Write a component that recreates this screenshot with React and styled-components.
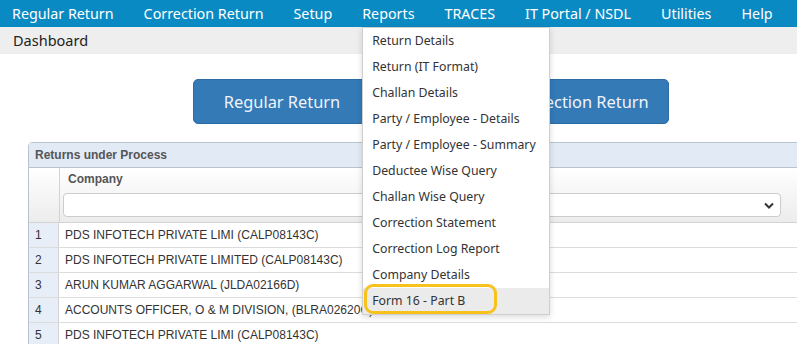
import React from "react";
import styled, { createGlobalStyle } from "styled-components";

const GlobalStyle = createGlobalStyle`
	body {
		margin: 0;
		overflow: hidden;
		background: #fff;
		font-family: "Noto Sans", sans-serif;
	}
`;

const NavBar = styled.div`
	height: 27px;
	background: #0a8ac3;
	display: flex;
	align-items: center;
	gap: 30px;
	padding-left: 12px;
	position: relative;
	z-index: 5;
`;

const NavItem = styled.div`
	position: relative;
	color: #fff;
	font-size: 14.3px;
	line-height: 27px;
	white-space: nowrap;
`;

const Menu = styled.div`
	position: absolute;
	top: 27px;
	left: 0;
	width: 186px;
	background: #fff;
	border: 1px solid #cfcfcf;
	box-shadow: 0 2px 6px rgba(0, 0, 0, 0.15);
`;

const MenuItem = styled.div`
	position: relative;
	height: 26px;
	line-height: 26px;
	padding-left: 9px;
	font-size: 12.3px;
	color: #333;
	background: ${(p) => (p.active ? "#ebebeb" : "#fff")};
`;

const Mark = styled.div`
	position: absolute;
	left: 1px;
	top: -4px;
	width: 127px;
	height: 24px;
	border: 3px solid #f7c21b;
	border-radius: 9px;
`;

const SubBar = styled.div`
	height: 27px;
	background: #eeeeee;
	padding-left: 13px;
	font-size: 14.5px;
	line-height: 27px;
	color: #222;
`;

const Buttons = styled.div`
	display: flex;
	margin: 25px 0 0 193px;
	gap: 120px;
`;

const BigButton = styled.div`
	width: 178px;
	height: 45px;
	box-sizing: border-box;
	background: #337ab7;
	border: 1px solid #2e6da4;
	border-radius: 5px;
	color: #f0f4fa;
	font-size: 16.4px;
	display: flex;
	align-items: center;
	justify-content: center;
`;

const Grid = styled.div`
	margin: 18px 0 0 28px;
	width: 800px;
	border: 1px solid #b9c3cf;
	border-radius: 4px 0 0 0;
	font-family: "Liberation Sans", Arial, sans-serif;
`;

const Caption = styled.div`
	height: 24px;
	line-height: 24px;
	background: #e2eaf5;
	border-bottom: 1px solid #b9c3cf;
	padding-left: 6px;
	font-size: 12px;
	font-weight: bold;
	color: #555;
`;

const HeadRow = styled.div`
	display: flex;
	height: 54px;
	background: linear-gradient(#ffffff, #ececec);
	border-bottom: 1px solid #d3d3d3;
`;

const NumHead = styled.div`
	width: 30px;
	border-right: 1px solid #d3d3d3;
`;

const ColHead = styled.div`
	flex: 1;
	padding: 4px 0 0 3px;
	font-size: 12px;
	font-weight: bold;
	color: #555;
`;

const HeadLabel = styled.div`
	padding-left: 5px;
	margin-bottom: 7px;
`;

const SelectBox = styled.div`
	width: 718px;
	height: 24px;
	box-sizing: border-box;
	border: 1px solid #ccc;
	border-radius: 4px;
	background: #fff;
	display: flex;
	align-items: center;
	justify-content: flex-end;
	padding-right: 6px;
`;

const Row = styled.div`
	display: flex;
	height: 24px;
	border-bottom: 1px solid #dcdcdc;
	font-size: 12px;
	color: #333;
`;

const NumCell = styled.div`
	width: 30px;
	background: #e8eef7;
	border-right: 1px solid #d3d3d3;
	padding-left: 6px;
	box-sizing: border-box;
	line-height: 24px;
`;

const Cell = styled.div`
	flex: 1;
	padding-left: 6px;
	line-height: 24px;
	white-space: nowrap;
`;

const navItems = ["Regular Return", "Correction Return", "Setup", "Reports", "TRACES", "IT Portal / NSDL", "Utilities", "Help"];

const reportItems = [
	"Return Details",
	"Return (IT Format)",
	"Challan Details",
	"Party / Employee - Details",
	"Party / Employee - Summary",
	"Deductee Wise Query",
	"Challan Wise Query",
	"Correction Statement",
	"Correction Log Report",
	"Company Details",
	"Form 16 - Part B",
];

const rows = [
	"PDS INFOTECH PRIVATE LIMI (CALP08143C)",
	"PDS INFOTECH PRIVATE LIMITED (CALP08143C)",
	"ARUN KUMAR AGGARWAL (JLDA02166D)",
	"ACCOUNTS OFFICER, O & M DIVISION, (BLRA02620C)",
	"PDS INFOTECH PRIVATE LIMI (CALP08143C)",
];

export default function App() {
	return (
		<>
			<GlobalStyle />
			<NavBar>
				{navItems.map((n) => (
					<NavItem key={n}>
						{n}
						{n === "Reports" && (
							<Menu>
								{reportItems.map((r, i) => (
									<MenuItem key={r} active={i === reportItems.length - 1}>
										{r}
										{i === reportItems.length - 1 && <Mark />}
									</MenuItem>
								))}
							</Menu>
						)}
					</NavItem>
				))}
			</NavBar>
			<SubBar>Dashboard</SubBar>
			<Buttons>
				<BigButton>Regular Return</BigButton>
				<BigButton>Correction Return</BigButton>
			</Buttons>
			<Grid>
				<Caption>Returns under Process</Caption>
				<HeadRow>
					<NumHead />
					<ColHead>
						<HeadLabel>Company</HeadLabel>
						<SelectBox>
							<svg width="10" height="7" viewBox="0 0 10 7">
								<path d="M1 1.5 L5 5.5 L9 1.5" fill="none" stroke="#333" strokeWidth="2" />
							</svg>
						</SelectBox>
					</ColHead>
				</HeadRow>
				{rows.map((r, i) => (
					<Row key={i}>
						<NumCell>{i + 1}</NumCell>
						<Cell>{r}</Cell>
					</Row>
				))}
			</Grid>
		</>
	);
}
